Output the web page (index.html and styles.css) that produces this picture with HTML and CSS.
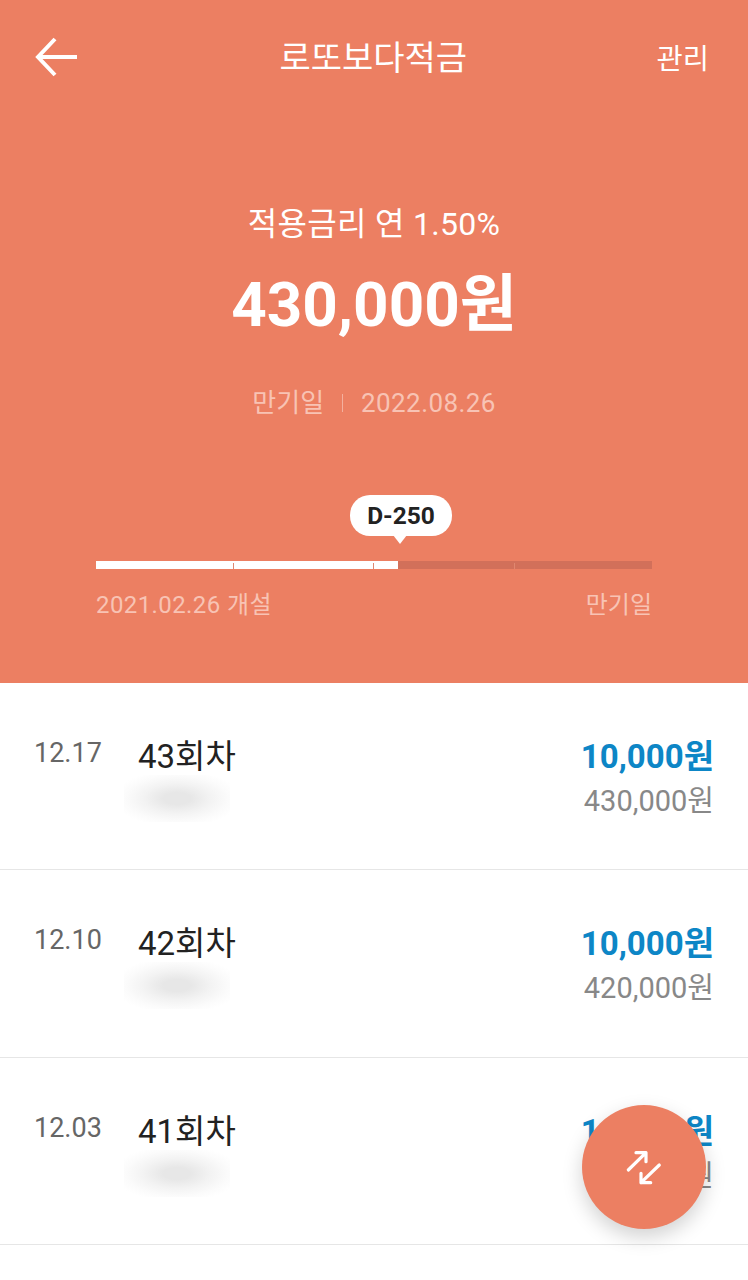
FILE: index.html
```html
<!DOCTYPE html>
<html lang="ko">
<head>
  <meta charset="UTF-8" />
  <meta name="viewport" content="width=device-width, initial-scale=1.0" />
  <title>로또보다적금</title>
  <link rel="stylesheet" href="styles.css">
</head>
<body>
  <div class="app">
    <section class="hero">
      <header class="topbar">
        <svg class="back" width="44" height="40" viewBox="0 0 44 40" fill="none" stroke="#fff" stroke-width="4">
          <path d="M43 20H4M21 2 4 20l17 18"/>
        </svg>
        <h1 class="title">로또보다적금</h1>
        <span class="manage">관리</span>
      </header>

      <div class="rate">적용금리 연 1.50%</div>
      <div class="balance">430,000원</div>
      <div class="due">
        <span>만기일</span>
        <i class="due-sep"></i>
        <span class="spaced">2022.08.26</span>
      </div>

      <div class="progress">
        <div class="bubble">D-250</div>
        <div class="track">
          <div class="fill"></div>
          <i class="tick tick-1"></i>
          <i class="tick tick-2"></i>
          <i class="tick tick-3"></i>
        </div>
        <div class="progress-labels">
          <span class="spaced">2021.02.26 개설</span>
          <span>만기일</span>
        </div>
      </div>
    </section>

    <ul class="list">
      <li class="row">
        <div class="date">12.17</div>
        <div class="info">
          <div class="round">43회차</div>
          <div class="masked"></div>
        </div>
        <div class="amounts">
          <div class="amount">10,000원</div>
          <div class="total">430,000원</div>
        </div>
      </li>
      <li class="row">
        <div class="date">12.10</div>
        <div class="info">
          <div class="round">42회차</div>
          <div class="masked"></div>
        </div>
        <div class="amounts">
          <div class="amount">10,000원</div>
          <div class="total">420,000원</div>
        </div>
      </li>
      <li class="row">
        <div class="date">12.03</div>
        <div class="info">
          <div class="round">41회차</div>
          <div class="masked"></div>
        </div>
        <div class="amounts">
          <div class="amount">10,000원</div>
          <div class="total">410,000원</div>
        </div>
      </li>
    </ul>

    <button class="fab" type="button" aria-label="이체">
      <svg width="36" height="36" viewBox="0 0 36 36" fill="none" stroke="#fff" stroke-width="3.2" stroke-linecap="round" stroke-linejoin="round">
        <path d="M2.3 21 20 3.7M10 3.7h10v9"/>
        <path d="M33.3 16 15 33.7M24.7 33.7H15v-9.4"/>
      </svg>
    </button>
  </div>
</body>
</html>
```

FILE: styles.css
```css
* {
  box-sizing: border-box;
}
body {
  margin: 0;
  background: #fff;
  font-family: Roboto, "Noto Sans CJK KR", sans-serif;
}
.app {
  position: relative;
  width: 748px;
  height: 1280px;
  overflow: hidden;
}
.hero {
  height: 683px;
  padding-top: 32px;
  background: #ec7f62;
  color: #fff;
  text-align: center;
}
.topbar {
  display: flex;
  align-items: center;
  justify-content: space-between;
  height: 50px;
  padding: 0 39px 0 34px;
}
.title {
  margin: -4px 0 0 12px;
  font-size: 34px;
  font-weight: 400;
}
.manage {
  margin-top: -2px;
  font-size: 28.5px;
}
.rate {
  margin-top: 122px;
  font-size: 32px;
  letter-spacing: 0.3px;
  line-height: 40px;
}
.balance {
  margin-top: 25px;
  font-size: 62px;
  font-weight: 700;
  line-height: 72px;
}
.due {
  display: flex;
  align-items: center;
  justify-content: center;
  gap: 18px;
  margin-top: 44px;
  color: #f8c3b4;
  font-size: 26px;
  line-height: 36px;
}
.spaced {
  letter-spacing: 0.4px;
}
.due-sep {
  width: 1px;
  height: 18px;
  background: #f4b09e;
}
.progress {
  position: relative;
  margin: 140px 96px 0;
}
.bubble {
  position: absolute;
  left: 254px;
  top: -66px;
  width: 102px;
  height: 41px;
  border-radius: 20px;
  background: #fff;
  color: #222;
  font-size: 24.5px;
  font-weight: 700;
  line-height: 42px;
}
.bubble::after {
  content: "";
  position: absolute;
  left: 43px;
  top: 40px;
  border-left: 7px solid transparent;
  border-right: 7px solid transparent;
  border-top: 9px solid #fff;
}
.track {
  position: relative;
  height: 8px;
  background: #d2705a;
}
.fill {
  width: 302px;
  height: 8px;
  background: #fff;
}
.tick {
  position: absolute;
  top: 2px;
  width: 1px;
  height: 6px;
  background: #e0876f;
}
.tick-1 {
  left: 137px;
}
.tick-2 {
  left: 277px;
}
.tick-3 {
  left: 418px;
}
.progress-labels {
  display: flex;
  justify-content: space-between;
  margin-top: 19px;
  color: #f8c3b4;
  font-size: 24px;
  line-height: 34px;
}
.list {
  margin: 0;
  padding: 0;
  list-style: none;
}
.row {
  display: flex;
  height: 187.4px;
  padding: 51px 34px 0;
  border-bottom: 1px solid #e6e6e6;
}
.date {
  width: 104px;
  color: #666;
  font-size: 27px;
  line-height: 38px;
}
.info {
  flex: 1;
}
.round {
  color: #222;
  font-size: 33px;
  line-height: 46px;
}
.masked {
  width: 106px;
  height: 47px;
  margin: -5px 0 0 -14px;
  background: radial-gradient(ellipse at center, #e7e7e7 18%, #f3f3f3 45%, #fbfbfb 68%, #fff 85%);
}
.amounts {
  text-align: right;
}
.amount {
  color: #0d86c6;
  font-size: 33px;
  font-weight: 700;
  line-height: 46px;
}
.total {
  color: #888;
  font-size: 29px;
  line-height: 42px;
}
.fab {
  position: absolute;
  left: 582px;
  top: 1105px;
  display: flex;
  align-items: center;
  justify-content: center;
  width: 124px;
  height: 124px;
  padding: 0;
  border: none;
  border-radius: 50%;
  background: #ec7f62;
  box-shadow: 0 8px 20px rgba(0,0,0,0.18);
}
```
